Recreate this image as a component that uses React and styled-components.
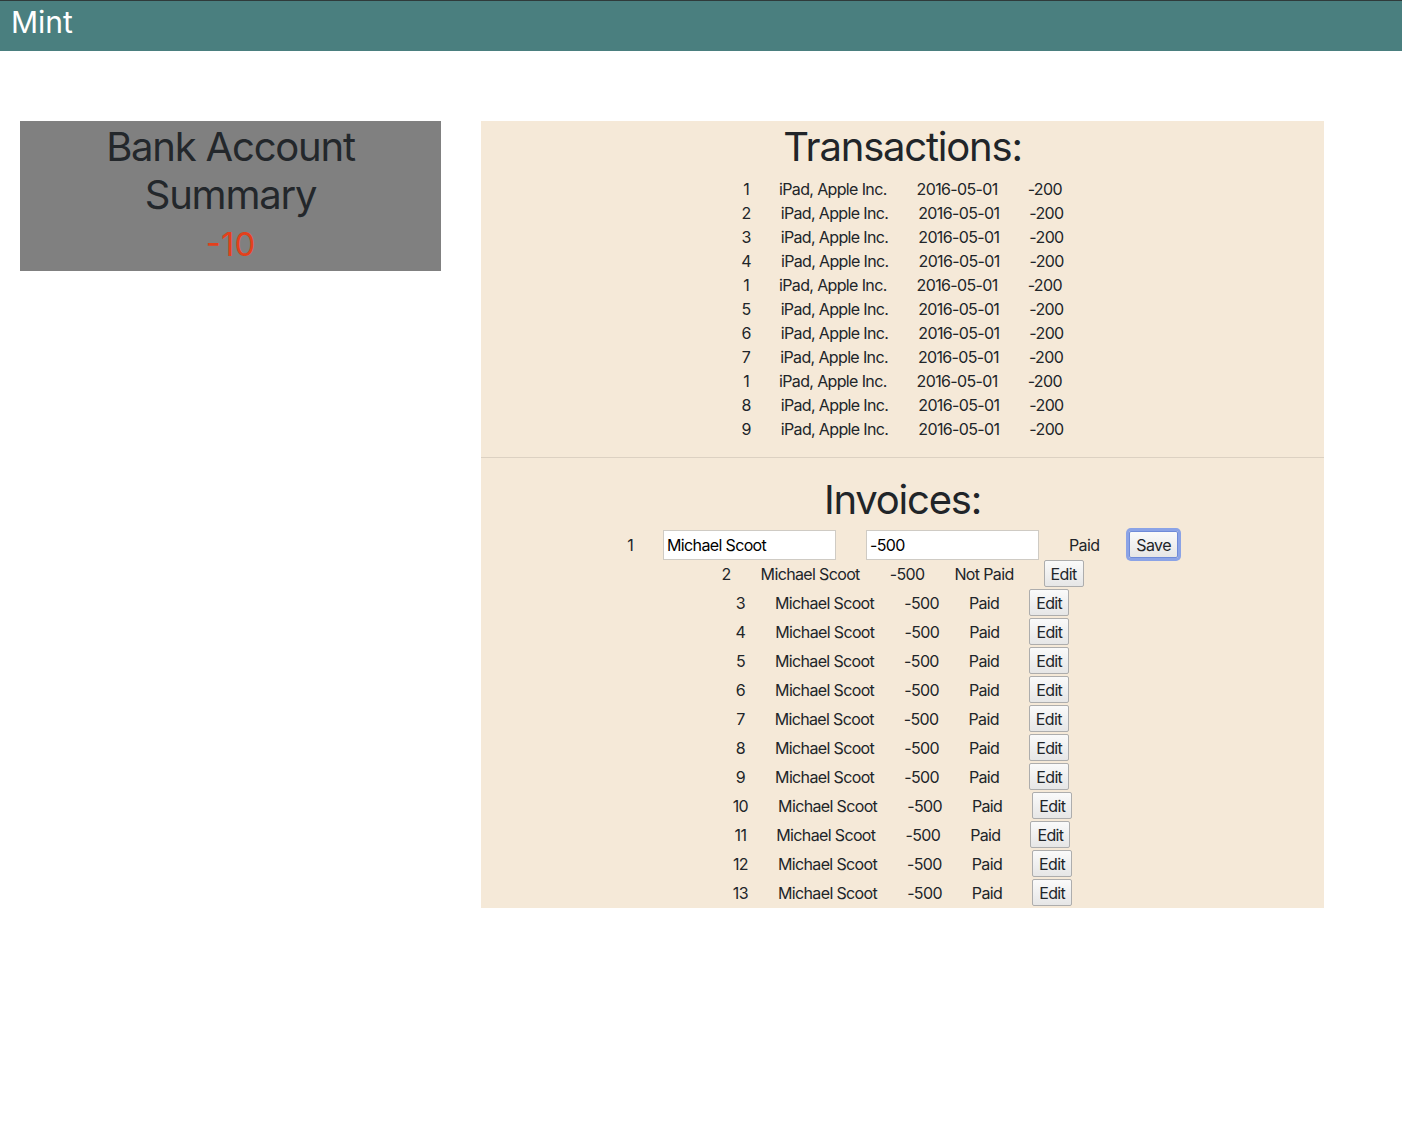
import React from 'react';
import styled, { createGlobalStyle } from 'styled-components';

const GlobalStyle = createGlobalStyle`
  body {
    margin: 0;
    font-family: Inter, "Liberation Sans", sans-serif;
    color: #212529;
    background: #fff;
  }
`;

const Header = styled.header`
  height: 50px;
  background-color: #4a7f7f;
  border-top: 1px solid #2f3a3a;
  color: #fff;
  font-size: 30px;
  line-height: 42px;
  padding-left: 11px;
`;

const Main = styled.main`
  display: grid;
  grid-template-columns: 421px 843px;
  gap: 40px;
  align-items: start;
  padding: 70px 0 0 20px;
`;

const SummaryCard = styled.div`
  background-color: #808080;
  height: 150px;
  padding-top: 2px;
  box-sizing: border-box;
  text-align: center;
`;

const CardTitle = styled.div`
  font-size: 40px;
  line-height: 48px;
  letter-spacing: -0.03em;
  color: #23272b;
`;

const Balance = styled.div`
  padding-top: 3px;
  font-size: 33px;
  line-height: 44px;
  color: ${p => (p.$negative ? '#e3401c' : '#1e7e34')};
`;

const Panel = styled.section`
  background-color: #f5e9d8;
  padding-bottom: 1px;
`;

const SectionTitle = styled.h2`
  margin: 0 0 6px;
  padding-top: 2px;
  font-size: 40px;
  font-weight: 400;
  line-height: 48px;
  letter-spacing: -0.03em;
  text-align: center;
`;

const Divider = styled.hr`
  margin: 16px 0;
  border: 0;
  border-top: 1px solid rgba(0, 0, 0, 0.1);
`;

const TxRow = styled.div`
  display: flex;
  justify-content: center;
  font-size: 16px;
  line-height: 24px;
  letter-spacing: -0.04em;
`;

const InvoiceRow = styled.div`
  display: flex;
  justify-content: center;
  align-items: center;
  height: 29px;
  font-size: 16px;
  letter-spacing: -0.04em;
`;

const Cell = styled.span`
  margin: 0 15px;
`;

const TextInput = styled.input`
  margin: 0 15px;
  width: 173px;
  height: 30px;
  box-sizing: border-box;
  padding: 1px 3px;
  border: 1px solid #cfcbc4;
  background: #fff;
  font-family: inherit;
  font-size: 16px;
  letter-spacing: inherit;
  color: #000;
  outline: none;
`;

const Button = styled.button`
  margin: 0 15px;
  height: 27px;
  padding: 0 6px;
  font-family: inherit;
  font-size: 16px;
  letter-spacing: inherit;
  color: #212529;
  background: linear-gradient(#fafafa, #e6e6e6);
  border: 1px solid #adadad;
  border-radius: 2px;
  box-shadow: ${p => (p.$focused ? '0 0 0 3px #8ba3e6' : 'none')};
  border-color: ${p => (p.$focused ? '#6f8bd8' : '#adadad')};
`;

const transactions = [1, 2, 3, 4, 1, 5, 6, 7, 1, 8, 9].map(id => ({
  id,
  name: 'iPad, Apple Inc.',
  date: '2016-05-01',
  amount: -200,
}));

const invoices = Array.from({ length: 13 }, (_, i) => ({
  id: i + 1,
  client: 'Michael Scoot',
  amount: -500,
  paid: i !== 1,
}));

export default function App() {
  return (
    <>
      <GlobalStyle />
      <Header>Mint</Header>
      <Main>
        <SummaryCard>
          <CardTitle>Bank Account<br />Summary</CardTitle>
          <Balance $negative>-10</Balance>
        </SummaryCard>

        <Panel>
          <SectionTitle>Transactions:</SectionTitle>
          {transactions.map((t, i) => (
            <TxRow key={i}>
              <Cell>{t.id}</Cell>
              <Cell>{t.name}</Cell>
              <Cell>{t.date}</Cell>
              <Cell>{t.amount}</Cell>
            </TxRow>
          ))}
          <Divider />
          <SectionTitle>Invoices:</SectionTitle>
          {invoices.map((inv, i) =>
            i === 0 ? (
              <InvoiceRow key={inv.id}>
                <Cell>{inv.id}</Cell>
                <TextInput defaultValue={inv.client} />
                <TextInput defaultValue={inv.amount} />
                <Cell>{inv.paid ? 'Paid' : 'Not Paid'}</Cell>
                <Button $focused>Save</Button>
              </InvoiceRow>
            ) : (
              <InvoiceRow key={inv.id}>
                <Cell>{inv.id}</Cell>
                <Cell>{inv.client}</Cell>
                <Cell>{inv.amount}</Cell>
                <Cell>{inv.paid ? 'Paid' : 'Not Paid'}</Cell>
                <Button>Edit</Button>
              </InvoiceRow>
            )
          )}
        </Panel>
      </Main>
    </>
  );
}
